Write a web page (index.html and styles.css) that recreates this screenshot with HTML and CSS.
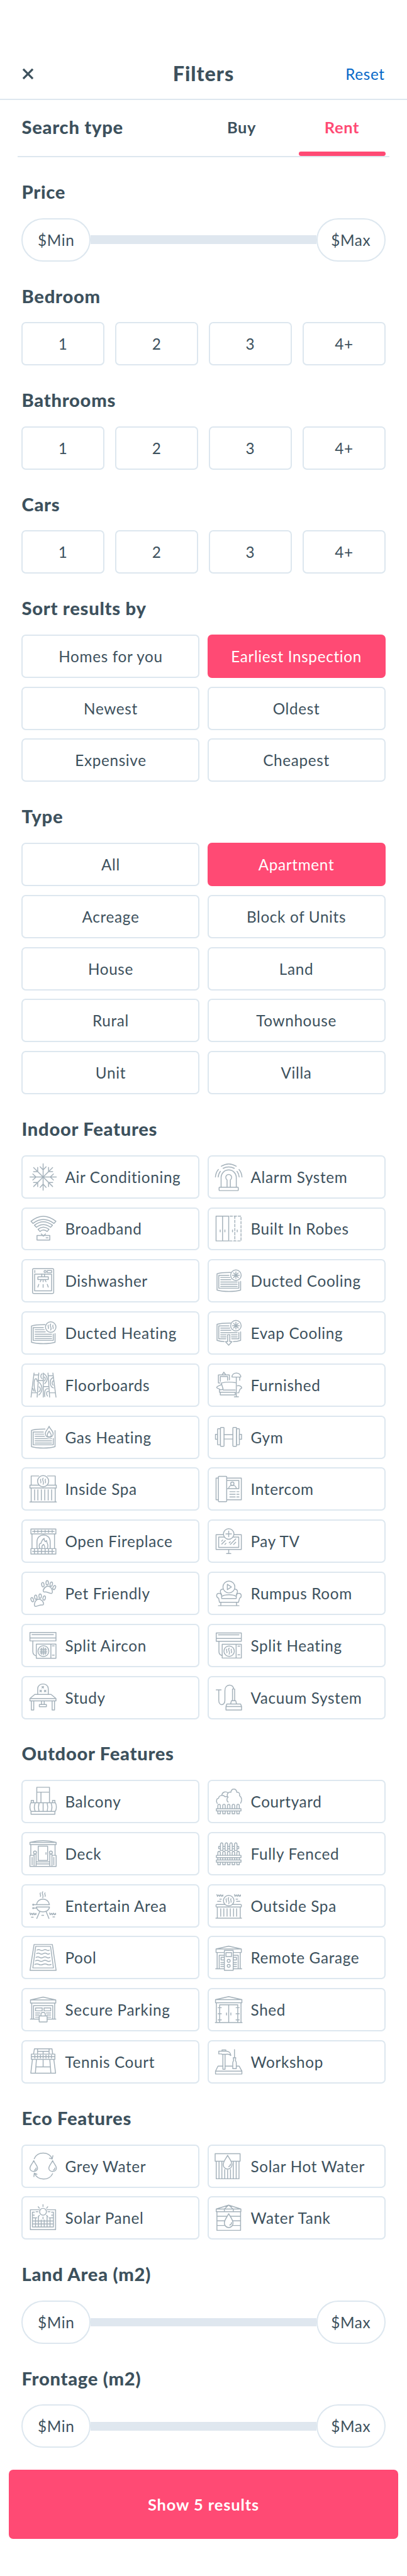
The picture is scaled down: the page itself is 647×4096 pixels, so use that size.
FILE: index.html
```html
<!DOCTYPE html>
<html lang="en">
<head>
<meta charset="utf-8">
<title>Filters</title>
<link rel="stylesheet" href="styles.css">
</head>
<body>
<svg class="sprite" aria-hidden="true">
  <defs>
    <path id="arm" d="M25 25V.7M19.5 6l5.5 6 5.5-6"/>
    <path id="arm-d" d="M25 25L7.5 7.5M7.3 15H15V7.3"/>
    <path id="steam" d="M-4.3-3.6c-2.4 1.8 1.6 3.4 0 6.6M0-5.6c-3.4 3.4 3 6.4 0 11.2M4.3-3.6c-2.4 1.8 1.6 3.4 0 6.6"/>
    <g id="vent">
      <path d="M28.5 9.6C17 9.6 8 10.2 3.5 12v30C15 45.5 36 45.5 47 42V26M25.5 15H6.7v23.7h37V27"/>
      <path d="M10.3 19H27M10.3 23H29M10.3 27.3h30.4M10.3 31.3h30.4M10.3 35.3h30.4"/>
    </g>
    <g id="frost"><circle r="9.7"/><path d="M0-6.3V6.3M-6.3 0H6.3M-4.3-4.3L4.3 4.3M4.3-4.3L-4.3 4.3"/></g>
    <path id="drop" class="solid" d="M0-12C-3-6-8-1-8 5.5A8 8 0 0 0 8 5.5C8-1 3-6 0-12Z"/>
    <path id="toe" d="M0-4C3-4 3 4 0 4S-3-4 0-4Z"/>
    <path id="pad" d="M-2-6.3C3-8 7-4 8 0C9 3 9 7 6 6.6C2 6-2 3-6 4C-10 4-9-3-2-6.3Z"/>
    <path id="grass" d="M0 0l1 3.3L3.5.6 5 3.3 7 .2 8.7 3.3 11 .6V3"/>
  </defs>
</svg>

<header class="header">
  <button class="close" aria-label="Close"><svg viewBox="0 0 20 20"><path d="M2 2l16 16M18 2L2 18"/></svg></button>
  <h1 class="header-title">Filters</h1>
  <a class="reset">Reset</a>
</header>

<nav class="tabs">
  <h2 class="title tabs-title">Search type</h2>
  <a class="tab">Buy</a>
  <a class="tab tab-active">Rent</a>
</nav>

<main class="content">
  <section class="section">
    <h2 class="title">Price</h2>
    <div class="slider"><span class="knob">$Min</span><span class="track"></span><span class="knob">$Max</span></div>
  </section>
  <section class="section">
    <h2 class="title">Bedroom</h2>
    <div class="grid-4"><a class="option">1</a><a class="option">2</a><a class="option">3</a><a class="option">4+</a></div>
  </section>
  <section class="section">
    <h2 class="title">Bathrooms</h2>
    <div class="grid-4"><a class="option">1</a><a class="option">2</a><a class="option">3</a><a class="option">4+</a></div>
  </section>
  <section class="section">
    <h2 class="title">Cars</h2>
    <div class="grid-4"><a class="option">1</a><a class="option">2</a><a class="option">3</a><a class="option">4+</a></div>
  </section>
  <section class="section">
    <h2 class="title">Sort results by</h2>
    <div class="grid-2">
      <a class="option">Homes for you</a><a class="option option-active">Earliest Inspection</a>
      <a class="option">Newest</a><a class="option">Oldest</a>
      <a class="option">Expensive</a><a class="option">Cheapest</a>
    </div>
  </section>
  <section class="section">
    <h2 class="title">Type</h2>
    <div class="grid-2">
      <a class="option">All</a><a class="option option-active">Apartment</a>
      <a class="option">Acreage</a><a class="option">Block of Units</a>
      <a class="option">House</a><a class="option">Land</a>
      <a class="option">Rural</a><a class="option">Townhouse</a>
      <a class="option">Unit</a><a class="option">Villa</a>
    </div>
  </section>

  <section class="section">
    <h2 class="title">Indoor Features</h2>
    <div class="grid-2">
      <a class="option feature"><svg class="icon" viewBox="0 0 50 50"><use href="#arm"/><use href="#arm" transform="rotate(90 25 25)"/><use href="#arm" transform="rotate(180 25 25)"/><use href="#arm" transform="rotate(270 25 25)"/><use href="#arm-d"/><use href="#arm-d" transform="rotate(90 25 25)"/><use href="#arm-d" transform="rotate(180 25 25)"/><use href="#arm-d" transform="rotate(270 25 25)"/></svg>Air Conditioning</a>
      <a class="option feature"><svg class="icon" viewBox="0 0 50 50"><rect x="7.3" y="43.7" width="35.4" height="6.3" rx="1"/><path d="M11 43.7V26a14 14 0 0 1 28 0v17.7M22 43.7V30.2a5.4 5.4 0 1 1 6 0v13.5M11.3 5Q25-3.5 39 5M14.7 9Q25 3.5 35.3 9M.5 25Q1 17 6 11M5.7 25Q6 19 9.7 14.5M49.5 25Q49 17 44 11M44.3 25Q44 19 40.3 14.5"/></svg>Alarm System</a>

      <a class="option feature"><svg class="icon" viewBox="0 0 50 50"><path d="M2.7 11.5Q25-7 48.6 11.5L45 15.5Q25 1 6.3 15.5ZM9 18.7Q25 6 42.3 18.7L38.7 22.5Q25 13 12.7 22.5ZM15.7 26.3Q25 18.5 35.8 26.3L32.5 30.3Q25 25 19.2 30.3ZM21.5 34.7l4 4 4-4M30.5 42H34"/><rect x="13.7" y="37.7" width="23.6" height="8.3" fill="none"/></svg>Broadband</a>
      <a class="option feature"><svg class="icon" viewBox="0 0 50 50"><path d="M1.7 2H25v45.7H1.7ZM13.7 2v45.7M9.3 27.5V31M18 27.5V31M32 27.5V31M40.7 27.5V31"/><path stroke-dasharray="4.5 3" d="M27.5 2h20.2v45.7H25M36.3 2v45.7"/></svg>Built In Robes</a>

      <a class="option feature"><svg class="icon" viewBox="0 0 50 50"><rect x="5.5" y="2.5" width="39" height="46" rx="2"/><circle cx="28.7" cy="8" r="2"/><rect x="32.7" y="6.2" width="8" height="3.8"/><rect x="9.3" y="12.7" width="31.3" height="30.7"/><path d="M9.7 5.7V10M22.5 12.7v5M27.5 12.7v5M15.3 17.7h19.3v5H15.3ZM21 24l-1.3 2.7M25 24v2.7M29 24l1.3 2.7M17 31.5l-1.7 5M25 32v5M32.7 31.5l1.7 5"/></svg>Dishwasher</a>
      <a class="option feature"><svg class="icon" viewBox="0 0 50 50"><use href="#vent"/><use href="#frost" x="38.3" y="14.7"/></svg>Ducted Cooling</a>

      <a class="option feature"><svg class="icon" viewBox="0 0 50 50"><use href="#vent"/><circle cx="39" cy="14" r="9.7"/><use href="#steam" x="39" y="14"/></svg>Ducted Heating</a>
      <a class="option feature"><svg class="icon" viewBox="0 0 50 50"><path d="M28.5 6.6C17 6.6 8 7.2 3.5 9v29.5Q9 40.5 16.7 41M33.7 41Q41 40.5 47 38.5V23M25.5 12H6.7v23.7h13M30.5 35.7h13.2V24M10.3 16H27M10.3 20H29M10.3 24.3h30.4M10.3 28.3h10M30 28.3h10.7M10.3 32.3h10M30 32.3h10.7M23 28h4v13h4L25 47.5 19 41h4Z"/><use href="#frost" x="38.3" y="11.5"/></svg>Evap Cooling</a>

      <a class="option feature"><svg class="icon" viewBox="0 0 50 50"><path d="M8.3 2.5L2.7 47M17 2.5L14 47M25.3 2.5V47M34 2.5L37 47M43 2.5L48.7 47M8 6h9M34.5 7.5h9M16 16.5h9.3M25.3 27.5h10.2M4 39h10.5M37 39h10.5M10.8 37C7 28 8 13 11.5 13c2.5 0 2.5 4 2.7 5M6 31l2 5M23 4c-4 3-2 8 0 9M18 20c7 7 6 18-1 23M17.5 28c3.5 2 3.5 7-.5 9M27 4c7 6 7 12 1 18M27.5 10c2 2 2 5 0 7M28 46c-1-8 0-15 6-14.5M33 45c-3-5-2-9 1.5-8.5M43 11c-7 3-6 17 1 19M43.5 17c-2.5 2-2.5 6 0 8"/></svg>Floorboards</a>
      <a class="option feature"><svg class="icon" viewBox="0 0 50 50"><path d="M9 21H6V6h20.3v9M9.500 18V9H23v7M13.300 5L16 1l3 4M31 10c0-10 16.300-10 16.300 0ZM45.300 10v6M39 10v36M35.300 46.500H43M11.300 21Q24 18 37.300 20.300M11.300 21l3.400 11Q12 34 9 33c-1-2-5-1-6.300-4C4 26 8 26 11.500 24M8 33v5h29M14.700 34H37M9.500 38v4.800H37V38M41 26c5-1 9 2 7.500 5C45 31 45 35 43.500 39H41"/></svg>Furnished</a>

      <a class="option feature"><svg class="icon" viewBox="0 0 50 50"><use href="#vent"/><path stroke="#fff" stroke-width="5" d="M36 4.500C34 10 29 13 29 18c0 9 14.500 9 14.500 0C43.500 13 38 10 36 4.500Z"/><path class="solid" d="M36 4.500C34 10 29 13 29 18c0 9 14.500 9 14.500 0C43.500 13 38 10 36 4.500Z"/><path d="M47 26V12.500M36 13.500c-2 3-4 5-3.500 8 .5 3.500 7 3.500 7.500 0 .3-3-2.500-5-4-8Z"/></svg>Gas Heating</a>
      <a class="option feature"><svg class="icon" viewBox="0 0 50 50"><rect x=".6" y="19.500" width="4" height="9"/><rect x="4.500" y="9" width="5.300" height="29.700" rx="1"/><rect x="9.800" y="6.700" width="6.600" height="34.700" rx="1"/><path d="M16.400 20h16.300M16.400 28h16.300"/><rect x="32.700" y="6.700" width="6.800" height="34.700" rx="1"/><rect x="39.500" y="9" width="5.200" height="29.700" rx="1"/><rect x="44.700" y="19.500" width="4" height="9"/></svg>Gym</a>

      <a class="option feature"><svg class="icon" viewBox="0 0 50 50"><path d="M3 18V1h14M33 1h14.300v17M3 23.300v25.500M47.300 23.300v25.500M.5 49h49M9.300 26.500v19M15.300 26.500v19M21.700 26.500v19M28 26.500v19M34.300 26.500v19M40.700 26.500v19"/><rect x=".7" y="18" width="48.600" height="5.300"/><circle cx="25" cy="10.700" r="10.300"/><use href="#steam" x="25" y="10.700"/></svg>Inside Spa</a>
      <a class="option feature"><svg class="icon" viewBox="0 0 50 50"><path d="M6 5H1.700v40H6M21.300 5h27v40h-27M21.300 9.300h22.400v15H21.300M25 24.300c0-8 14-8 14 0M27 30h10M40 30h4M27 34.700h10M40 34.700h4M27 39.700h10M40 39.700h4"/><circle cx="31.700" cy="15.300" r="3"/><rect x="6" y="1.700" width="15.300" height="46.700" rx="1"/></svg>Intercom</a>

      <a class="option feature"><svg class="icon" viewBox="0 0 50 50"><path d="M2.500 2.500h46v9h-46ZM5.500 7h40M9 5v4M15.300 5v4M22 5v4M28.700 5v4M35 5v4M41.700 5v4M4.500 11.500v27M46 11.500v27M13.700 38.500V26c0-16.500 24.300-16.500 24.300 0v12.500M2.500 38.700h46v10h-46ZM5.500 43.700h40M9 39v9M15.300 39v9M22 39v9M28.700 39v9M35 39v9M41.700 39v9M19 38.500c-3-7 0-10 2-9.500 1-3 2-7 6-9-.5 4 1 4 2 6l2.500-2c-1 4 5 7 1 14.500M23 38c-1-4 1-6 3-7 1 2 3 4 2 7"/></svg>Open Fireplace</a>
      <a class="option feature"><svg class="icon" viewBox="0 0 50 50"><path d="M1.700 13h46.600v27.300H1.700ZM6.500 17.500h37v19h-37ZM12.300 30.300l6.500-6.600M12 25l2-2M18 31l2-2M28 31l10-10M26 28l2-2M34 31l4-4M25 40.300v7.500M21 47.800h8"/><circle cx="25" cy="11.700" r="9.700"/><path d="M25 6.500v10.400M19.800 11.700h10.400"/></svg>Pay TV</a>

      <a class="option feature"><svg class="icon" viewBox="0 0 50 50"><use href="#toe" transform="translate(24.500 9) rotate(-10)"/><use href="#toe" x="32.500" y="5.500"/><use href="#toe" transform="translate(40 8) rotate(12)"/><use href="#toe" transform="translate(45.500 14.300) rotate(25)"/><use href="#pad" x="33.500" y="18.500"/><use href="#toe" transform="translate(5 36.700) rotate(-20)"/><use href="#toe" transform="translate(11.500 32) rotate(-8)"/><use href="#toe" x="19.500" y="30"/><use href="#toe" transform="translate(27 33.500) rotate(12)"/><use href="#pad" transform="translate(17.500 42.500) scale(-1 1)"/></svg>Pet Friendly</a>
      <a class="option feature"><svg class="icon" viewBox="0 0 50 50"><path d="M12 27C8 22 9 17 15 17M39 27c4-5 2-10-3-10M10.500 42v5.500M39.500 42v5.500M6 47.700h38M8 41.500L6.500 34C1 32 2 25 7 25c4 0 5 3 5 6v3.500h27V31c0-3 1-6 5-6 5 0 5.500 7 1 9l-2 7.500ZM12 30.500c6-4 21-4 27 0"/><circle cx="25.400" cy="13.200" r="11"/><path d="M22.500 8.200l7.500 5-7.500 5Z"/></svg>Rumpus Room</a>

      <a class="option feature"><svg class="icon" viewBox="0 0 50 50"><path d="M.7.800h48v15.600H.7ZM4.500 5H44M.7 11h48M6 16.300V36c0 5 2 7 6.400 8M12.400 22.300h36.300v26H12.400ZM39.300 22.300v26M42 25.500h3.500M42 42.500h3.500"/><circle cx="25.500" cy="35.300" r="10"/><path d="M22 29.500v11.600M29 29.500v11.600M25.500 28.500v13.600M19.500 32h12M19 35.300h13M19.500 38.600h12"/></svg>Split Aircon</a>
      <a class="option feature"><svg class="icon" viewBox="0 0 50 50"><path d="M2 1.800h46.300V17H2ZM6 5.300h38M2 12h46.300M7 17v19c0 5 2 6.500 6 7.500M13 22.500h35.300V48H13ZM38.700 22.500V48M42 26h3.500M42 42h3.500"/><circle cx="25.800" cy="35.300" r="9.600"/><use href="#steam" x="25.800" y="35.300"/></svg>Split Heating</a>

      <a class="option feature"><svg class="icon" viewBox="0 0 50 50"><path d="M15 20V9.500C15-2.200 34.500-2.200 34.500 9.500V20M9.500 20h30.200l9 7.500H.7ZM.7 27.500h48V32H.7ZM3.300 32v16.700h4.400V32M41.600 32v16.700H46V32M22 32v6.300M27 32v6.300M18 38.500h13v4H18Z"/><path d="M22.900 5.200l3 3M25.900 5.200l-3 3M19 12.200l3 3M22 12.200l-3 3M27.200 12.200l3 3M30.200 12.200l-3 3"/></svg>Study</a>
      <a class="option feature"><svg class="icon" viewBox="0 0 50 50"><path d="M2 11.500h9M6.700 11.500V31c0 10.500 11.300 10.500 11.300 0V13C18 0 34 0 34 10M32 10h4v21.700h-4ZM30 31.700h8l1.500 6h-11ZM21.500 37.700H47l1.700 4.300v6.700H20V42ZM20 42.300h28.700"/></svg>Vacuum System</a>
    </div>
  </section>

  <section class="section">
    <h2 class="title">Outdoor Features</h2>
    <div class="grid-2">
      <a class="option feature"><svg class="icon" viewBox="0 0 50 50"><path d="M13.300-1.300h23.400v28.500H13.300ZM13.300 7.700h23.400M21 7.700v19.500M3 27v-4h4.300v4M42.300 27v-4h4.400v4M2.300 27.300h45.400c2.400 4 2.400 12-.5 16H2.800c-2.800-4-2.800-12-.5-16M10.500 27.500q-3.500 8 0 15.500M17.500 27.500q-2 8 0 15.500M25 27.500V43M32.500 27.500q2 8 0 15.500M39.500 27.500q3.500 8 0 15.500M2.700 43.300h44v5.200h-44Z"/></svg>Balcony</a>
      <a class="option feature"><svg class="icon" viewBox="0 0 50 50"><path d="M4 28.500C1 24 3 19 6.300 19 7 13 15 12 18 16h4M12.300 13.500C13 7 20 5.500 23.500 9M24 26c-4-3-2-8 0-9-4-4 0-11 5-9 1-8 10-8 11 0 4-1 6 3 5 6 5 4 4 10 2 14"/><path d="M5 38.300V33c0-4 4.600-4 4.600 0v5.300M14 38.300V33c0-4 4.600-4 4.600 0v5.300M22.700 38.300V33c0-4 4.600-4 4.600 0v5.300M31.400 38.300V33c0-4 4.600-4 4.600 0v5.300M40 38.300V33c0-4 4.600-4 4.600 0v5.300M2.300 38.300h45.400v4H2.300ZM5 42.300v5.200h4.600v-5.200M14 42.300v5.200h4.600v-5.200M22.700 42.300v5.200h4.600v-5.200M31.400 42.300v5.200H36v-5.200M40 42.300v5.200h4.600v-5.200"/></svg>Courtyard</a>

      <a class="option feature"><svg class="icon" viewBox="0 0 50 50"><path d="M.7 4Q25-2.500 49 4v4H.7ZM.7 4H49M2.300 8v20M47 8v20M16 11h17.300v26.300H16ZM30.300 23v3M8.300 25.500h3.700v22.800H8.300ZM37.300 25.500h4v22.800h-4ZM.7 28h7.600v20.300H.7ZM41.300 28H49v20.300h-7.700ZM4.700 31.500v14M44.700 31.500v14M12 40h25.300M12 43.700h25.300M12 48.300h25.300"/><circle cx="10" cy="22.700" r="2.700"/><circle cx="39.300" cy="22.700" r="2.700"/></svg>Deck</a>
      <a class="option feature"><svg class="icon" viewBox="0 0 50 50"><path d="M6.500 11.500h37v4.300h-37Z"/><path class="solid" d="M9.700 19V8c0-4 4.600-4 4.600 0v11ZM18.400 19V8c0-4 4.600-4 4.600 0v11ZM27 19V8c0-4 4.600-4 4.600 0v11ZM35.700 19V8c0-4 4.600-4 4.600 0v11Z"/><path class="solid" d="M5 45.300V23.500c0-4 4.600-4 4.600 0v21.800ZM14 45.300V23.500c0-4 4.600-4 4.600 0v21.800ZM22.700 45.300V23.500c0-4 4.600-4 4.600 0v21.800ZM31.400 45.300V23.500c0-4 4.600-4 4.600 0v21.800ZM40 45.300V23.500c0-4 4.600-4 4.600 0v21.800Z"/><path class="solid" d="M2.300 28h45.400v4.300H2.300ZM2.300 36.500h45.400v4.200H2.300Z"/></svg>Fully Fenced</a>

      <a class="option feature"><svg class="icon" viewBox="0 0 50 50"><use href="#steam" x="24.300" y="4.500"/><path d="M12.700 22.700c2-13.700 22-13.700 24 0ZM6.700 22.700h6M12.700 27h24c-1 12-23 12-24 0ZM7 29h6M18.700 35.700L13.300 48M30.700 35.700l5 12.300M3.500 45.700h3.200M22.500 42.300H26M43 45.300h3.200"/><circle cx="6.700" cy="22.700" r="1"/><circle cx="6.700" cy="29" r="1"/><use href="#grass" x=".8" y="38"/><use href="#grass" x="37" y="38"/></svg>Entertain Area</a>
      <a class="option feature"><svg class="icon" viewBox="0 0 50 50"><path d="M4 27v20.500M46.300 27v20.500M1.300 47.600h47.400M10.300 30v14M16 30v14M22 30v14M28 30v14M34 30v14M39.700 30v14M8.500 12.400h3M4.500 16.600h6M38.500 12.400h3M39.500 16.600h6"/><rect x="1.700" y="22.300" width="46.600" height="4.700" rx="1"/><circle cx="25" cy="15.300" r="9.700"/><use href="#steam" x="25" y="15.300"/><use href="#grass" x="3.300" y="4"/><use href="#grass" x="35.700" y="4"/></svg>Outside Spa</a>

      <a class="option feature"><svg class="icon" viewBox="0 0 50 50"><path d="M8.300 1H42l7 47.800H.8ZM11.300 4.500h27.400L44 44.200H6Z"/><path d="M13.700 11.300q3-2 6 0t6 0 6 0 4.600 0M13 17.800q3-2 6 0t6.500 0 6 0 5.500 0M12 24.700q3.500-2 6.500 0t6.500 0 6.500 0 6 0M11 31.200q3.500-2 7 0t7 0 7 0 6.500 0M9.700 37.700q4-2 7.500 0t7.500 0 7.500 0 7.500 0"/></svg>Pool</a>
      <a class="option feature"><svg class="icon" viewBox="0 0 50 50"><path d="M1.700 9.300L25 4l23.300 5.300v6.500H1.700ZM1.700 9.300h46.600M3.700 15.800v29.900M46.300 15.800v29.900M1 45.700h48M7.500 45.500V20.800h35v24.700M11 24.700h6v5h-6ZM33.300 24.700h6v5h-6ZM10.500 34.300h6M10.500 37.700h6M10.500 41.500h6M33.500 34.300h6M33.500 37.700h6M33.500 41.500h6"/><rect x="17" y="12" width="16.300" height="36.800"/><rect x="20" y="16" width="10.300" height="7.200"/><circle cx="25" cy="31.200" r="2.700"/><circle cx="25" cy="40.400" r="2.700"/></svg>Remote Garage</a>

      <a class="option feature"><svg class="icon" viewBox="0 0 50 50"><path d="M1.700 7L25 1.800 48.300 7v5.800H1.700ZM1.700 7h46.600M4 12.800v29.500M46.300 12.800v29.500M1.500 42.300h47M7.300 42.300V17.500h35.400v24.800M11 21.700h12.300v5.400H11ZM26.700 21.700H39v5.400H26.700ZM11 31h8M11 34.700h7M11 38.700h6M31 31h8M32 34.700h7M33 38.700h6"/><path d="M21 36.600V34c0-5.500 8-5.500 8 0v2.600"/><rect x="17.700" y="36.600" width="14.700" height="11" rx="1"/></svg>Secure Parking</a>
      <a class="option feature"><svg class="icon" viewBox="0 0 50 50"><path d="M.7 6.300L25 .8l24.300 5.500v5.900H.7ZM.7 6.300h48.600M2.300 12.200v36.600M47.700 12.200v36.600M.3 48.800h49.400M8.300 48.800V16h33.400v32.800M25 16v32.800M5.500 21.300h6M5.500 32.400h6M5.500 43.900h6M38.500 21.300h6M38.500 32.400h6M38.500 43.900h6M21 31v3.700M29 31v3.700"/></svg>Shed</a>

      <a class="option feature"><svg class="icon" viewBox="0 0 50 50"><path d="M7.300 10.600L9 .8h32.300l1.400 9.800M14.700.8v9.800M36 .8v9.800M14.700 5.600H36M25 5.600v5M3.300 10.600h43.400v9.600H3.300ZM3.300 15.300h43.400M9.700 12.500v5.500M14.700 12.500v5.500M20 12.500v5.500M25 12.500v5.500M30.300 12.500v5.500M35.300 12.500v5.500M40.300 12.500v5.500M5.300 20.200l-3 25.600H48l-3.300-25.600M12.700 20.200l-2 25.600M37.300 20.200l2 25.600M11.700 34.300h26.800M25 20.200v14.100"/></svg>Tennis Court</a>
      <a class="option feature"><svg class="icon" viewBox="0 0 50 50"><path d="M5.300 32.800h39L49.300 42v5.400H.7V42ZM.7 42h48.600"/><path class="solid" d="M14.300 11h4v27.600h-4ZM6.700 5.200h6V3h7v2.200c5-.5 8.500 2.800 9.300 8-3-3-6-3-9.300-2.200h-7l-1-.7H6.700ZM33.700 17.500L34 23q-1.500 1.500-1.500 4v10.500H39V27q0-2.500-1.500-4l.3-5.500"/><path d="M13 5.200h6.700M35.700 2.200v15.300M33.500 17.500h4.500"/></svg>Workshop</a>
    </div>
  </section>

  <section class="section">
    <h2 class="title">Eco Features</h2>
    <div class="grid-2">
      <a class="option feature"><svg class="icon" viewBox="0 0 50 50"><path d="M8.600 11C14-3 36-3 41.700 11M36.500 10l5.200 1.500 1.300-6M42.500 38.500C36 52 15 52 9 37.700M8 44l.7-6.300 5 2"/><path d="M7.700 14.500C5 20.500.7 24 .7 28.500c0 8 14 8 14 0 0-4.500-4.500-8-7-14ZM42.500 14.500c-2.700 6-7 9.500-7 14 0 8 14 8 14 0 0-4.500-4.500-8-7-14ZM12 28c0 2-1 3.300-3 4M46.800 28c0 2-1 3.300-3 4"/></svg>Grey Water</a>
      <a class="option feature"><svg class="icon" viewBox="0 0 50 50"><path d="M0 1.700h46v14H0ZM2 15.700V48h42V15.700M7.200 15.700V48M12.400 15.700V48M17.700 31v17M23 32v16M28.300 31v17M33.500 15.700V48M38.800 15.700V48"/><use href="#drop" x="23" y="16.700"/><path d="M28.300 21c0 2.500-1.300 4-3.300 4.700"/></svg>Solar Hot Water</a>
      <a class="option feature"><svg class="icon" viewBox="0 0 50 50"><path d="M18 10H1.500v36.700H48V10H32M9 14.500H5.300v27.200H44V14.500h-3.500M11 26v15.700M16.300 23v18.700M21.500 29v12.700M27 29v12.700M32.300 23v18.700M37.700 26v15.700M5.300 25h8M36 25h8M5.300 30.700H44M5.300 36.300H44M5.300 20h3.500M40.500 20H44"/><circle cx="24.800" cy="13.700" r="6.300"/><path d="M24.800.5V4M24.800 23.500V27M12 13.700h3.500M34 13.700h3.500M16 4.500l2 2.700M33.500 4.500l-2 2.700M16 23l2-2.700M33.500 23l-2-2.700"/></svg>Solar Panel</a>
      <a class="option feature"><svg class="icon" viewBox="0 0 50 50"><path d="M2 8.700L25 1.500l22.500 7.200v5H2ZM2 8.700h45.500M17 8.700l8-7.200 8 7.200M17 8.700v5M33.500 8.700v5M3.300 13.700V48h43.600V13.700M3.300 22h43.600M3.300 30.500h43.600M3.300 39h43.600"/><use href="#drop" x="25" y="29.300"/><path d="M30.300 33.500c0 2.500-1.300 4-3.300 4.700"/></svg>Water Tank</a>
    </div>
  </section>

  <section class="section">
    <h2 class="title">Land Area (m2)</h2>
    <div class="slider"><span class="knob">$Min</span><span class="track"></span><span class="knob">$Max</span></div>
  </section>
  <section class="section">
    <h2 class="title">Frontage (m2)</h2>
    <div class="slider"><span class="knob">$Min</span><span class="track"></span><span class="knob">$Max</span></div>
  </section>
</main>

<footer class="footer"><button class="submit">Show 5 results</button></footer>
</body>
</html>
```

FILE: styles.css
```css
/* 1rem = 10 design units */
html {
  font-size: 8.6235px;
}

* {
  box-sizing: border-box;
}

body {
  margin: 0;
  background: #fff;
  color: #3d515d;
  font-family: Lato, "Open Sans", sans-serif;
  font-size: 2.82rem;
  letter-spacing: 0.027em;
  overflow-x: hidden;
}

h1,
h2 {
  margin: 0;
}

button {
  border: 0;
  padding: 0;
  background: none;
  font: inherit;
  color: inherit;
}

.sprite {
  display: block;
  width: 0;
  height: 0;
}

.header {
  display: grid;
  grid-template-columns: 1fr auto 1fr;
  align-items: center;
  height: 18.4rem;
  padding: 9rem 4.1rem 0;
  border-bottom: 2px solid #dde7ef;
}

.close svg {
  display: block;
  width: 2.2rem;
  height: 2.2rem;
  fill: none;
  stroke: #3d515d;
  stroke-width: 3.4;
}

.header-title {
  font-size: 3.75rem;
  font-weight: 900;
  letter-spacing: 0.03em;
  line-height: 4rem;
}

.reset {
  justify-self: end;
  color: #0768c8;
}

.tabs {
  display: flex;
  gap: 2.5rem;
  height: 10.6rem;
  margin: 0 3.2rem;
  padding: 0 0.8rem;
  border-bottom: 2px solid #dde7ef;
}

.title {
  font-size: 3.38rem;
  font-weight: 900;
  letter-spacing: 0.025em;
  line-height: 4rem;
}

.tabs-title {
  flex: 1;
  padding-top: 3rem;
}

.tab {
  display: flex;
  flex-direction: column;
  justify-content: space-between;
  width: 16rem;
  padding-top: 3.1rem;
  font-size: 2.95rem;
  font-weight: 700;
  line-height: 4rem;
  text-align: center;
}

.tab-active {
  color: #ff4a74;
}

.tab-active::after {
  content: "";
  height: 0.8rem;
  border-radius: 0.4rem;
  background: #ff4a74;
}

.content {
  padding: 0 4rem;
}

.section {
  padding-top: 4.4rem;
}

.section .title {
  margin-bottom: 2.8rem;
}

.slider {
  display: flex;
  align-items: center;
  height: 8rem;
}

.knob {
  display: flex;
  align-items: center;
  justify-content: center;
  width: 12.7rem;
  height: 8rem;
  border: 2px solid #dde7ef;
  border-radius: 4rem;
}

.track {
  flex: 1;
  height: 1.6rem;
  background: #dfe7ef;
}

.grid-4 {
  display: grid;
  grid-template-columns: repeat(4, 1fr);
  gap: 2.07rem;
}

.grid-2 {
  display: grid;
  grid-template-columns: repeat(2, 1fr);
  gap: 1.6rem 1.4rem;
}

.option {
  display: flex;
  align-items: center;
  justify-content: center;
  height: 8rem;
  border: 2px solid #dde7ef;
  border-radius: 0.8rem;
  white-space: nowrap;
}

.option-active {
  border-color: #ff4a74;
  background: #ff4a74;
  color: #fff;
}

.feature {
  justify-content: flex-start;
  gap: 1.5rem;
  padding-left: 1.27rem;
}

.icon {
  flex: none;
  width: 5rem;
  height: 5rem;
  overflow: visible;
  fill: #fff;
  stroke: #a5b2bb;
  stroke-width: 1.7;
  stroke-linecap: round;
  stroke-linejoin: round;
}

path {
  fill: none;
}

.solid {
  fill: #fff;
}

.footer {
  padding: 4rem 1.6rem 0;
}

.submit {
  display: block;
  width: 100%;
  height: 12.8rem;
  border-radius: 0.8rem;
  background: #ff4a74;
  color: #fff;
  font-size: 2.95rem;
  font-weight: 700;
  letter-spacing: 0.035em;
}
```
